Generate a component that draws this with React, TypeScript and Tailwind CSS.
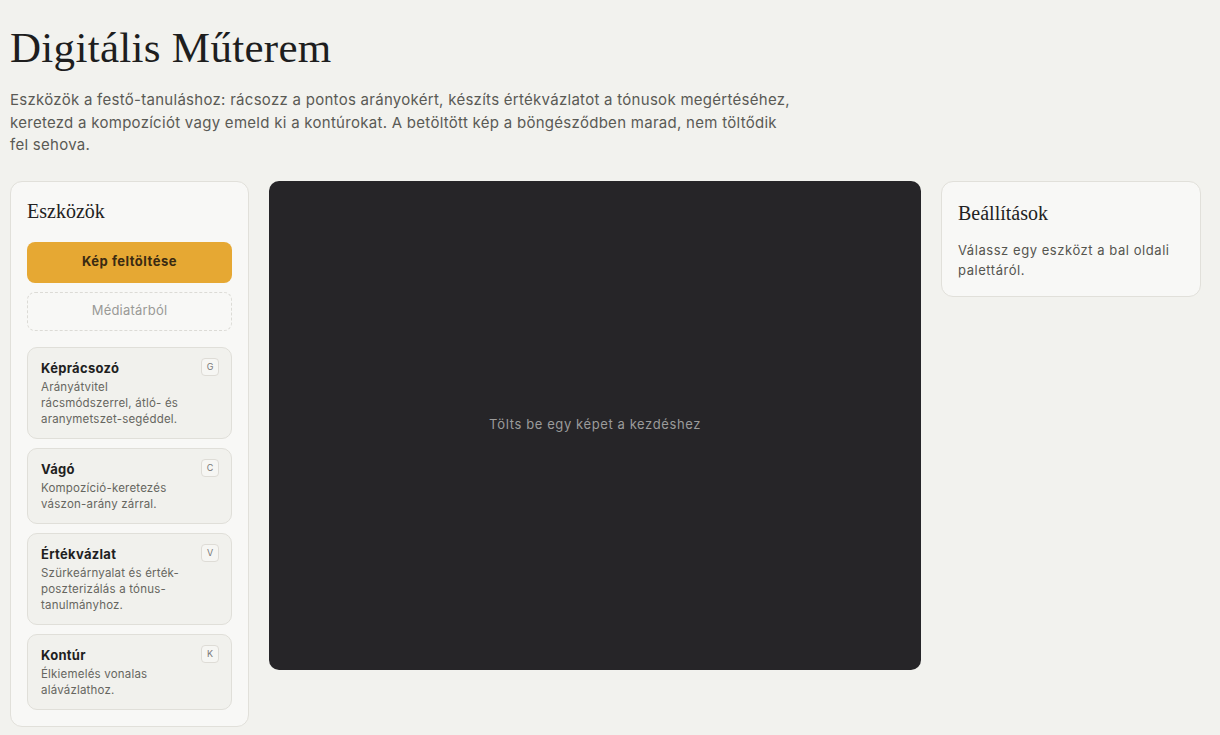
import React from "react";

const serif = { fontFamily: '"Liberation Serif", "DejaVu Serif", serif' };

const tools = [
  { name: "Képrácsozó", key: "G", desc: "Arányátvitel rácsmódszerrel, átló- és aranymetszet-segéddel." },
  { name: "Vágó", key: "C", desc: "Kompozíció-keretezés vászon-arány zárral." },
  { name: "Értékvázlat", key: "V", desc: "Szürkeárnyalat és érték-poszterizálás a tónus-tanulmányhoz." },
  { name: "Kontúr", key: "K", desc: "Élkiemelés vonalas alávázlathoz." },
];

export default function App() {
  return (
    <div
      className="min-h-[735px] w-full bg-[#f2f2ee] text-[#2a2a2a] px-[10px] pt-[22px] pb-[8px]"
      style={{ fontFamily: 'Inter, "Open Sans", "Liberation Sans", sans-serif' }}
    >
      <h1 className="text-[43px] leading-[52px] font-normal text-[#1e1e1e] tracking-[0.3px]" style={serif}>
        Digitális Műterem
      </h1>
      <p className="mt-[15px] max-w-[784px] text-[15px] leading-[22.5px] tracking-[0.28px] text-[#5a5a55]">
        Eszközök a festő-tanuláshoz: rácsozz a pontos arányokért, készíts értékvázlatot a tónusok megértéséhez,
        keretezd a kompozíciót vagy emeld ki a kontúrokat. A betöltött kép a böngésződben marad, nem töltődik fel
        sehova.
      </p>

      <div className="mt-[24px] flex items-start gap-[20px]">
        {/* Left panel */}
        <aside className="w-[239px] shrink-0 rounded-[12px] border border-[#e1e0da] bg-[#f8f8f6] px-[16px] pt-[16px] pb-[16px]">
          <h2 className="text-[20px] leading-[26px] text-[#222]" style={serif}>
            Eszközök
          </h2>
          <button className="mt-[18px] h-[41px] w-full rounded-[8px] bg-[#e6a833] text-[13px] font-bold tracking-[0.5px] text-[#3a2a12]">
            Kép feltöltése
          </button>
          <button className="mt-[9px] h-[39px] w-full rounded-[8px] border border-dashed border-[#dcdbd6] text-[13px] tracking-[0.2px] text-[#9a9a96]">
            Médiatárból
          </button>
          <div className="mt-[16px] flex flex-col gap-[9px]">
            {tools.map((t) => (
              <div
                key={t.name}
                className="relative rounded-[10px] border border-[#e0dfd9] bg-[#f1f1ed] pl-[13px] pr-[46px] pt-[11px] pb-[11px]"
              >
                <div className="text-[13px] font-bold leading-[18px] tracking-[0.3px] text-[#1f1f1f]">{t.name}</div>
                <div className="mt-[2px] text-[11.5px] leading-[16px] tracking-[0.2px] text-[#666660]">{t.desc}</div>
                <span className="absolute right-[12px] top-[10px] flex h-[18px] w-[18px] items-center justify-center rounded-[4px] border border-[#dedcd6] bg-[#f6f6f3] text-[9px] text-[#777]">
                  {t.key}
                </span>
              </div>
            ))}
          </div>
        </aside>

        {/* Canvas */}
        <main className="flex h-[489px] flex-1 items-center justify-center rounded-[10px] bg-[#262528]">
          <span className="text-[13px] tracking-[0.6px] text-[#9b9b9b]">Tölts be egy képet a kezdéshez</span>
        </main>

        {/* Right panel */}
        <aside className="w-[260px] shrink-0 rounded-[12px] border border-[#e1e0da] bg-[#f8f8f6] px-[16px] pt-[18px] pb-[16px] mr-[9px]">
          <h2 className="text-[20px] leading-[26px] text-[#222]" style={serif}>
            Beállítások
          </h2>
          <p className="mt-[14px] text-[13px] leading-[20px] tracking-[0.55px] text-[#55554f]">
            Válassz egy eszközt a bal oldali palettáról.
          </p>
        </aside>
      </div>
    </div>
  );
}
